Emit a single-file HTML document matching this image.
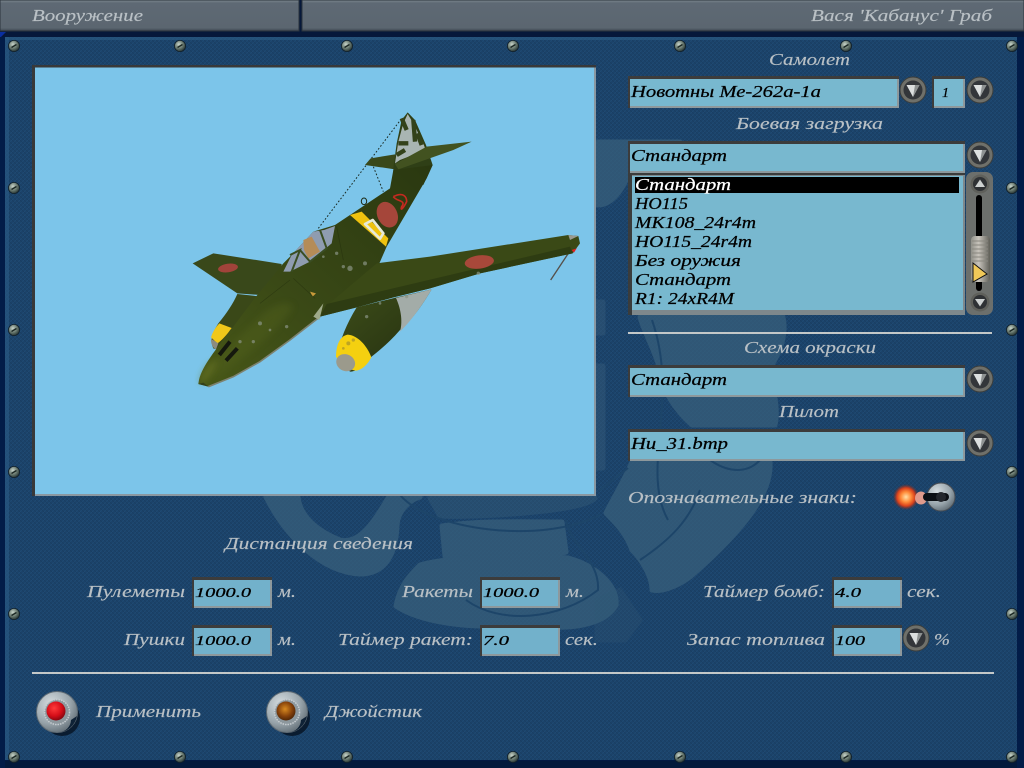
<!DOCTYPE html>
<html><head><meta charset="utf-8"><title>Вооружение</title>
<style>
html,body{margin:0;padding:0;background:#06183a;width:1024px;height:768px;overflow:hidden}
svg{display:block}
text{font-family:"Liberation Serif","DejaVu Serif",serif;font-style:italic;font-size:17px}
.l{fill:#b9c0c5;stroke:#b9c0c5;stroke-width:.15}
.k{fill:#000;stroke:#000;stroke-width:.25}
</style></head><body>
<svg width="1024" height="768" viewBox="0 0 1024 768" xmlns="http://www.w3.org/2000/svg">
<defs>
<pattern id="tex" width="4" height="4" patternUnits="userSpaceOnUse">
<rect width="4" height="4" fill="#1b4269"/>
<path d="M0 4L4 0" stroke="#1f4a72" stroke-width="1"/>
<path d="M0 0L4 4" stroke="#183c60" stroke-width=".6"/>
</pattern>
<radialGradient id="sc" cx=".4" cy=".35" r=".7"><stop offset="0" stop-color="#c8d4ca"/><stop offset=".55" stop-color="#66766c"/><stop offset="1" stop-color="#1d2a2a"/></radialGradient>
<radialGradient id="metal" cx=".35" cy=".3" r=".8"><stop offset="0" stop-color="#d5dcdf"/><stop offset=".6" stop-color="#98a4ab"/><stop offset="1" stop-color="#58646c"/></radialGradient>
<radialGradient id="red" cx=".4" cy=".35" r=".7"><stop offset="0" stop-color="#ff3a3a"/><stop offset=".6" stop-color="#d40d18"/><stop offset="1" stop-color="#7a0710"/></radialGradient>
<radialGradient id="amber" cx=".45" cy=".4" r=".7"><stop offset="0" stop-color="#d88a20"/><stop offset=".55" stop-color="#84400a"/><stop offset="1" stop-color="#3a1c06"/></radialGradient>
<radialGradient id="glow"><stop offset="0" stop-color="#ffe0a8"/><stop offset=".4" stop-color="#ff8a38"/><stop offset=".7" stop-color="#d8401c"/><stop offset="1" stop-color="#7a2a20" stop-opacity="0"/></radialGradient>
<linearGradient id="hdr" x1="0" y1="0" x2="0" y2="1"><stop offset="0" stop-color="#7d8890"/><stop offset=".1" stop-color="#5e6974"/><stop offset=".9" stop-color="#5b6670"/><stop offset="1" stop-color="#3d4650"/></linearGradient>
<linearGradient id="thumb" x1="0" y1="0" x2="1" y2="0"><stop offset="0" stop-color="#8f8f88"/><stop offset=".4" stop-color="#c8c4bc"/><stop offset="1" stop-color="#5f5f58"/></linearGradient>
<linearGradient id="body" x1="0" y1="1" x2="1" y2="0"><stop offset="0" stop-color="#485818"/><stop offset=".4" stop-color="#3a4916"/><stop offset="1" stop-color="#2a3810"/></linearGradient>
<linearGradient id="nac" x1="0" y1="0" x2="1" y2="1"><stop offset="0" stop-color="#3e4e1a"/><stop offset="1" stop-color="#232e0f"/></linearGradient>
<filter id="bl" x="-30%" y="-30%" width="160%" height="160%"><feGaussianBlur stdDeviation="10"/></filter>
<g id="s"><circle r="5.6" fill="url(#sc)" stroke="#10202c" stroke-width=".8"/><path d="M-2.500 1.500L2.500-1.500" stroke="#1c2824" stroke-width="1.400"/></g>
<g id="dn"><circle r="13" fill="#6f706a"/><circle r="13" fill="none" stroke="#3c3e3c" stroke-width="1"/><circle r="9.500" fill="#33363a"/><path d="M-6.500-5H6.500L0 7Z" fill="#dcdfdf"/><path d="M6.500-5L0 7L2-5Z" fill="#8e9292"/></g>
<g id="up"><circle r="9.500" fill="#5f605b"/><circle r="7" fill="#2e3134"/><path d="M-5 3H5L0-4.500Z" fill="#cdd1d1"/></g>
<g id="dn2"><circle r="9.500" fill="#5f605b"/><circle r="7" fill="#2e3134"/><path d="M-5-3H5L0 4.500Z" fill="#cdd1d1"/></g>
<g id="bb"><circle cx="5" cy="6" r="18" fill="#0a1c30"/><circle r="20.500" fill="url(#metal)" stroke="#5f6b74" stroke-width="1"/><path d="M20 4A20.500 20.500 0 0 1 2 20.500A13 13 0 0 0 14 8Z" fill="#0f2236"/><circle r="12.500" fill="#8c979d" stroke="#c6ccd0" stroke-width="1.500" stroke-dasharray="1.500 1"/></g>
</defs>

<!-- backing and panel -->
<rect width="1024" height="768" fill="#06183a"/>
<path d="M0 32H6L0 38Z" fill="#0a2fa0"/>
<rect x="0" y="37" width="1024" height="731" fill="#021a44"/>
<rect x="5" y="37" width="1012" height="723" fill="url(#tex)"/>
<rect x="5" y="37" width="4" height="723" fill="#2a5a86" opacity=".6"/>
<rect x="5" y="37" width="1012" height="3" fill="#2c5c84" opacity=".6"/>
<rect x="0" y="761" width="1024" height="7" fill="#031a3c"/>
<rect x="1017" y="37" width="7" height="731" fill="#021c48"/>
<rect x="0" y="37" width="5" height="731" fill="#021c48"/>

<!-- emblem -->
<g fill="#3a607c" stroke="#3a607c" stroke-width="5" stroke-linejoin="round" opacity=".72">
<path d="M266 497C285 535 320 572 360 574C385 574 396 555 397 525C398 510 410 500 420 497L388 498C375 520 360 545 340 540C315 530 300 515 298 497Z"/>
<path d="M442 526C480 520 530 522 562 522L566 552C530 560 480 560 445 556Z"/>
<path d="M420 565C450 556 530 555 568 558C595 565 618 585 616 605C605 625 570 632 520 624C470 630 420 622 396 606C400 585 410 575 420 565Z"/>
<path d="M430 498L595 498C585 512 470 518 440 516Z" opacity=".55"/>
<path d="M632 462L770 462C772 490 750 525 690 577C675 588 660 592 652 590C652 575 640 558 632 550C625 530 612 520 606 513C612 500 622 485 632 462Z"/>
<path d="M640 317L783 317C788 340 775 360 768 372C776 395 778 412 775 425L692 425C675 410 662 390 660 370C655 350 645 335 640 317Z"/>
<path d="M598 142L680 142C690 155 695 165 700 172L628 176C622 190 612 205 598 205Z"/>
<path d="M597 302H603V333H597ZM597 366H603V468H597Z" opacity=".6"/>
<path d="M597 600L620 590L640 620L625 640L597 640Z" opacity=".3"/>
</g>
<g fill="none" stroke="#1d4569" stroke-width="2">
<path d="M400 495C430 530 540 545 600 515"/>
<path d="M466 600C500 625 560 620 598 590C600 560 570 545 566 520"/>
<path d="M652 320C680 400 640 470 668 520"/>
<path d="M690 440C720 480 760 480 770 440"/>
<path d="M600 490L628 468"/>
<path d="M640 560C670 540 690 520 700 490"/>
</g>

<!-- header -->
<rect x="0" y="0" width="299" height="31" fill="url(#hdr)" stroke="#2b333c"/>
<rect x="302" y="0" width="722" height="31" fill="url(#hdr)" stroke="#2b333c"/>
<text x="32" y="21" textLength="111" lengthAdjust="spacingAndGlyphs" class="l">Вооружение</text>
<text x="811" y="21" textLength="181" lengthAdjust="spacingAndGlyphs" class="l">Вася 'Кабанус' Граб</text>

<!-- screws -->
<g>
<use href="#s" x="14" y="46"/><use href="#s" x="180" y="46"/><use href="#s" x="347" y="46"/><use href="#s" x="513" y="46"/><use href="#s" x="680" y="46"/><use href="#s" x="846" y="46"/><use href="#s" x="1012" y="46"/>
<use href="#s" x="14" y="188"/><use href="#s" x="14" y="330"/><use href="#s" x="14" y="472"/><use href="#s" x="14" y="614"/>
<use href="#s" x="1012" y="188"/><use href="#s" x="1012" y="330"/><use href="#s" x="1012" y="472"/><use href="#s" x="1012" y="614"/>
<use href="#s" x="14" y="757"/><use href="#s" x="180" y="757"/><use href="#s" x="347" y="757"/><use href="#s" x="513" y="757"/><use href="#s" x="680" y="757"/><use href="#s" x="846" y="757"/><use href="#s" x="1012" y="757"/>
</g>

<!-- preview -->
<rect x="32" y="65" width="564" height="431" fill="#8a98a2"/>
<path d="M32 65H596V67.500H35V496H32Z" fill="#38393a"/>
<rect x="35" y="67.500" width="559" height="426.500" fill="#7cc5ea"/>

<!-- plane -->
<g transform="translate(180 100) scale(.33333)">
<path d="M415 385L660 62M572 180L610 275" stroke="#1a2a22" stroke-width="3" stroke-dasharray="5 6" fill="none"/>
<path d="M1165 460L1112 540" stroke="#55504a" stroke-width="4" fill="none"/>
<ellipse cx="552" cy="304" rx="8" ry="10" fill="none" stroke="#1d2b18" stroke-width="3"/>
<!-- left engine -->
<path d="M172 582L245 590L150 715C135 745 115 752 100 745C90 725 95 700 115 670C140 640 160 610 172 582Z" fill="#3a4818"/>
<path d="M118 670L155 684C140 705 125 722 112 730L93 712C98 695 108 680 118 670Z" fill="#f0c81a"/>
<path d="M93 716L115 730L108 748C98 745 92 730 93 716Z" fill="#8c8c80"/>
<!-- right engine -->
<path d="M530 622L650 592L755 568C730 610 700 655 660 690C630 725 600 750 572 772C555 795 530 815 510 815L470 770C480 720 500 670 530 622Z" fill="url(#nac)"/>
<path d="M648 594L755 568C730 610 700 655 660 695C670 660 660 620 648 594Z" fill="#a3aca8"/>
<path d="M468 770C468 735 480 708 503 704C532 706 560 735 574 772C562 795 545 810 528 812C505 810 480 790 468 770Z" fill="#f4d010"/>
<ellipse cx="497" cy="788" rx="29" ry="25" fill="#9b9a8c" transform="rotate(25 497 788)"/>
<g fill="#b09a28" opacity=".8"><circle cx="505" cy="730" r="6"/><circle cx="520" cy="720" r="5"/><circle cx="490" cy="745" r="4"/></g>
<!-- left wing -->
<path d="M38 490L100 460L305 492L300 530L240 585L172 580Z" fill="#39481a"/>
<ellipse cx="144" cy="504" rx="30" ry="13" fill="#a1433a" transform="rotate(-8 144 504)"/>
<!-- tail rear -->
<path d="M555 195L572 175L645 163L645 208Z" fill="#39481a"/>
<!-- fin -->
<path d="M640 205L650 130L665 60L683 37L705 60L738 135L758 195L730 255L700 235L640 265Z" fill="#2f3f16"/>
<path d="M645 190L655 125L670 70L683 42L700 70L730 130L737 150L660 180Z" fill="#a9b5b2"/>
<path d="M665 55L680 90M700 60L705 125M655 130L685 130M650 165L675 150M712 100L725 135" stroke="#33421a" stroke-width="13" fill="none"/>
<path d="M645 192L740 140L875 125L820 150L655 208Z" fill="#425220"/>
<!-- fuselage -->
<path d="M55 852C60 810 90 770 160 680L220 600L310 490L335 465L400 395L465 375L510 345L630 265L640 210L758 195L740 235L620 440L598 490L560 570L420 650L330 720L240 785L160 830L85 860Z" fill="url(#body)"/>
<path d="M90 830C110 770 170 720 240 650C280 610 320 600 340 620C300 690 200 770 100 835Z" fill="#52621e" filter="url(#bl)" opacity=".4"/>
<path d="M60 845C68 810 90 785 115 775C105 800 90 830 68 850Z" fill="#6a7628" filter="url(#bl)" opacity=".7"/>
<path d="M85 860L160 830L240 785L330 720L420 650" fill="none" stroke="#7c8270" stroke-width="5"/>
<path d="M55 852L85 860L70 848Z" fill="#33401a"/>
<!-- wing -->
<path d="M430 625L590 490L750 470L1165 405L1195 408L1200 430L1178 460L900 520L750 565L640 592L530 622L420 650L400 660Z" fill="#3a4916"/>
<path d="M440 612L1170 440L1178 460L900 520L750 565L640 592L530 622L420 650Z" fill="#2e3c12"/>
<ellipse cx="898" cy="486" rx="44" ry="20" fill="#a8483a" transform="rotate(-7 898 486)"/>
<path d="M1165 405L1195 408L1170 420Z" fill="#9a9a90"/>
<path d="M1175 450L1190 445L1182 458Z" fill="#e02020"/>
<!-- band and hinomaru -->
<path d="M510 345L545 335L625 415L618 440Z" fill="#efc20f"/>
<path d="M555 372L578 360L610 400L600 416Z" fill="none" stroke="#e8ead8" stroke-width="8" stroke-linejoin="round"/>
<ellipse cx="622" cy="344" rx="30" ry="40" fill="#a5463a" transform="rotate(-25 622 344)"/>
<path d="M640 290C670 275 680 290 680 305C670 325 660 335 665 320C680 300 650 305 640 290" fill="none" stroke="#c42a20" stroke-width="5"/>
<!-- canopy -->
<path d="M310 515L335 465L400 395L432 390L465 378L455 430L390 485L330 515Z" fill="#8f9cb0"/>
<path d="M370 420L395 410L420 455L385 475L372 450Z" fill="#b58c58"/>
<path d="M330 465L360 450L335 515M360 450L390 485L440 445L420 390" fill="none" stroke="#3a4d22" stroke-width="6"/>
<!-- details -->
<path d="M400 650L430 610L418 660Z" fill="#9faa8a"/>
<path d="M390 575L408 580L398 590Z" fill="#c89a3a"/>
<path d="M340 535L405 595M330 540L240 610M470 380L490 480" stroke="#222c0c" stroke-width="2" stroke-opacity=".5" fill="none"/>
<g fill="#8a9484" opacity=".7"><circle cx="240" cy="670" r="6"/><circle cx="320" cy="680" r="5"/><circle cx="510" cy="505" r="8"/><circle cx="470" cy="460" r="5"/><circle cx="555" cy="490" r="6"/><circle cx="220" cy="725" r="5"/><circle cx="680" cy="590" r="5"/><circle cx="895" cy="520" r="5"/><circle cx="490" cy="500" r="5"/><circle cx="430" cy="470" r="4"/><circle cx="270" cy="690" r="4"/><circle cx="600" cy="610" r="4"/><circle cx="560" cy="650" r="5"/><circle cx="180" cy="725" r="5"/></g>
<path d="M118 765L150 725M138 782L172 745" stroke="#15180e" stroke-width="12"/>
</g>

<!-- right column -->
<text x="769" y="65" textLength="81" lengthAdjust="spacingAndGlyphs" class="l">Самолет</text>
<rect x="628" y="76" width="271" height="32" fill="#8d989c"/><path d="M628 76H899V79H630V108H628Z" fill="#3c3c3c"/><rect x="630" y="79" width="267" height="27" fill="#78b8cf"/>
<text x="631" y="97" textLength="190" lengthAdjust="spacingAndGlyphs" class="k">Новотны Ме-262а-1а</text>
<use href="#dn" x="913" y="90"/>
<rect x="932" y="76" width="33" height="32" fill="#8d989c"/><path d="M932 76H965V79H934V108H932Z" fill="#3c3c3c"/><rect x="934" y="79" width="29" height="27" fill="#78b8cf"/>
<text x="942" y="97" class="k" style="font-size:14px">1</text>
<use href="#dn" x="980" y="90"/>

<text x="736" y="129" textLength="147" lengthAdjust="spacingAndGlyphs" class="l">Боевая загрузка</text>
<rect x="628" y="141" width="337" height="32" fill="#8d989c"/><path d="M628 141H965V144H630V173H628Z" fill="#3c3c3c"/><rect x="630" y="144" width="333" height="27" fill="#78b8cf"/>
<text x="631" y="161" textLength="96" lengthAdjust="spacingAndGlyphs" class="k">Стандарт</text>
<use href="#dn" x="980" y="155"/>

<rect x="628" y="173" width="337" height="142" fill="#7e888c"/><path d="M628 173H965V175H632V315H628Z" fill="#3a3c3c"/><rect x="632" y="176" width="331" height="134" fill="#78b8cf"/>
<rect x="635" y="177" width="324" height="16" fill="#000"/>
<text x="635" y="190" textLength="96" lengthAdjust="spacingAndGlyphs" fill="#fff" stroke="#fff" stroke-width=".25">Стандарт</text>
<text x="635" y="209" textLength="53" lengthAdjust="spacingAndGlyphs" class="k">HO115</text>
<text x="635" y="228" textLength="121" lengthAdjust="spacingAndGlyphs" class="k">MK108_24r4m</text>
<text x="635" y="247" textLength="117" lengthAdjust="spacingAndGlyphs" class="k">HO115_24r4m</text>
<text x="635" y="266" textLength="106" lengthAdjust="spacingAndGlyphs" class="k">Без оружия</text>
<text x="635" y="285" textLength="96" lengthAdjust="spacingAndGlyphs" class="k">Стандарт</text>
<text x="635" y="304" textLength="99" lengthAdjust="spacingAndGlyphs" class="k">R1: 24xR4M</text>

<!-- scrollbar -->
<rect x="966" y="172" width="27" height="143" rx="7" fill="#6c6f6c"/>
<rect x="976" y="195" width="6" height="96" rx="3" fill="#000"/>
<use href="#up" x="980" y="184"/>
<use href="#dn2" x="980" y="302"/>
<rect x="971" y="236" width="19" height="46" rx="4" fill="url(#thumb)"/>
<path d="M972 241H988M972 245H988M972 249H988M972 253H988M972 257H988M972 261H988" stroke="#8a8880" stroke-width="1"/>
<path d="M973 263L987 274L973 282Z" fill="#f0c858" stroke="#111" stroke-width="1"/>

<rect x="628" y="332" width="364" height="2" fill="#c4c8c8"/>
<text x="744" y="353" textLength="132" lengthAdjust="spacingAndGlyphs" class="l">Схема окраски</text>
<rect x="628" y="365" width="337" height="32" fill="#8d989c"/><path d="M628 365H965V368H630V397H628Z" fill="#3c3c3c"/><rect x="630" y="368" width="333" height="27" fill="#78b8cf"/>
<text x="631" y="385" textLength="96" lengthAdjust="spacingAndGlyphs" class="k">Стандарт</text>
<use href="#dn" x="980" y="379"/>
<text x="779" y="417" textLength="60" lengthAdjust="spacingAndGlyphs" class="l">Пилот</text>
<rect x="628" y="429" width="337" height="32" fill="#8d989c"/><path d="M628 429H965V432H630V461H628Z" fill="#3c3c3c"/><rect x="630" y="432" width="333" height="27" fill="#78b8cf"/>
<text x="631" y="449" textLength="97" lengthAdjust="spacingAndGlyphs" class="k">Hu_31.bmp</text>
<use href="#dn" x="980" y="443"/>

<text x="628" y="503" textLength="229" lengthAdjust="spacingAndGlyphs" class="l">Опознавательные знаки:</text>
<circle cx="906" cy="497" r="13" fill="url(#glow)"/>
<ellipse cx="921" cy="498" rx="6" ry="6.500" fill="#e09a8c"/>
<circle cx="941" cy="497" r="14" fill="url(#metal)" stroke="#4a4e54" stroke-width="1"/>
<path d="M927 497H945" stroke="#0c0f14" stroke-width="8" stroke-linecap="round"/>
<circle cx="941" cy="497" r="5" fill="#23262c"/>

<text x="225" y="549" textLength="188" lengthAdjust="spacingAndGlyphs" class="l">Дистанция сведения</text>

<!-- inputs row 1 -->
<text x="87" y="597" textLength="98" lengthAdjust="spacingAndGlyphs" class="l">Пулеметы</text>
<rect x="192" y="577" width="80" height="31" fill="#8d989c"/><path d="M192 577H272V580H194V608H192Z" fill="#3c3c3c"/><rect x="194" y="580" width="76" height="26" fill="#72b1cb"/>
<text x="195" y="597" textLength="56" lengthAdjust="spacingAndGlyphs" class="k" style="font-size:14px">1000.0</text>
<text x="278" y="597" textLength="18" lengthAdjust="spacingAndGlyphs" class="l">м.</text>

<text x="402" y="597" textLength="71" lengthAdjust="spacingAndGlyphs" class="l">Ракеты</text>
<rect x="480" y="577" width="80" height="31" fill="#8d989c"/><path d="M480 577H560V580H482V608H480Z" fill="#3c3c3c"/><rect x="482" y="580" width="76" height="26" fill="#72b1cb"/>
<text x="483" y="597" textLength="56" lengthAdjust="spacingAndGlyphs" class="k" style="font-size:14px">1000.0</text>
<text x="566" y="597" textLength="18" lengthAdjust="spacingAndGlyphs" class="l">м.</text>

<text x="703" y="597" textLength="122" lengthAdjust="spacingAndGlyphs" class="l">Таймер бомб:</text>
<rect x="832" y="577" width="70" height="31" fill="#8d989c"/><path d="M832 577H902V580H834V608H832Z" fill="#3c3c3c"/><rect x="834" y="580" width="66" height="26" fill="#72b1cb"/>
<text x="835" y="597" textLength="26" lengthAdjust="spacingAndGlyphs" class="k" style="font-size:14px">4.0</text>
<text x="907" y="597" textLength="34" lengthAdjust="spacingAndGlyphs" class="l">сек.</text>

<!-- inputs row 2 -->
<text x="124" y="645" textLength="61" lengthAdjust="spacingAndGlyphs" class="l">Пушки</text>
<rect x="192" y="625" width="80" height="31" fill="#8d989c"/><path d="M192 625H272V628H194V656H192Z" fill="#3c3c3c"/><rect x="194" y="628" width="76" height="26" fill="#72b1cb"/>
<text x="195" y="645" textLength="56" lengthAdjust="spacingAndGlyphs" class="k" style="font-size:14px">1000.0</text>
<text x="278" y="645" textLength="18" lengthAdjust="spacingAndGlyphs" class="l">м.</text>

<text x="338" y="645" textLength="135" lengthAdjust="spacingAndGlyphs" class="l">Таймер ракет:</text>
<rect x="480" y="625" width="80" height="31" fill="#8d989c"/><path d="M480 625H560V628H482V656H480Z" fill="#3c3c3c"/><rect x="482" y="628" width="76" height="26" fill="#72b1cb"/>
<text x="483" y="645" textLength="26" lengthAdjust="spacingAndGlyphs" class="k" style="font-size:14px">7.0</text>
<text x="565" y="645" textLength="33" lengthAdjust="spacingAndGlyphs" class="l">сек.</text>

<text x="687" y="645" textLength="138" lengthAdjust="spacingAndGlyphs" class="l">Запас топлива</text>
<rect x="832" y="625" width="70" height="31" fill="#8d989c"/><path d="M832 625H902V628H834V656H832Z" fill="#3c3c3c"/><rect x="834" y="628" width="66" height="26" fill="#72b1cb"/>
<text x="835" y="645" textLength="30" lengthAdjust="spacingAndGlyphs" class="k" style="font-size:14px">100</text>
<use href="#dn" x="916" y="638"/>
<text x="934" y="645" textLength="16" lengthAdjust="spacingAndGlyphs" class="l">%</text>

<rect x="32" y="672" width="962" height="2" fill="#c4c8c8"/>

<!-- bottom buttons -->
<use href="#bb" x="57" y="712"/>
<circle cx="56" cy="711" r="9.500" fill="url(#red)"/>
<use href="#bb" x="287" y="712"/>
<circle cx="286" cy="711" r="9.500" fill="url(#amber)"/>
<text x="96" y="717" textLength="105" lengthAdjust="spacingAndGlyphs" class="l">Применить</text>
<text x="325" y="717" textLength="97" lengthAdjust="spacingAndGlyphs" class="l">Джойстик</text>
</svg>
</body></html>
